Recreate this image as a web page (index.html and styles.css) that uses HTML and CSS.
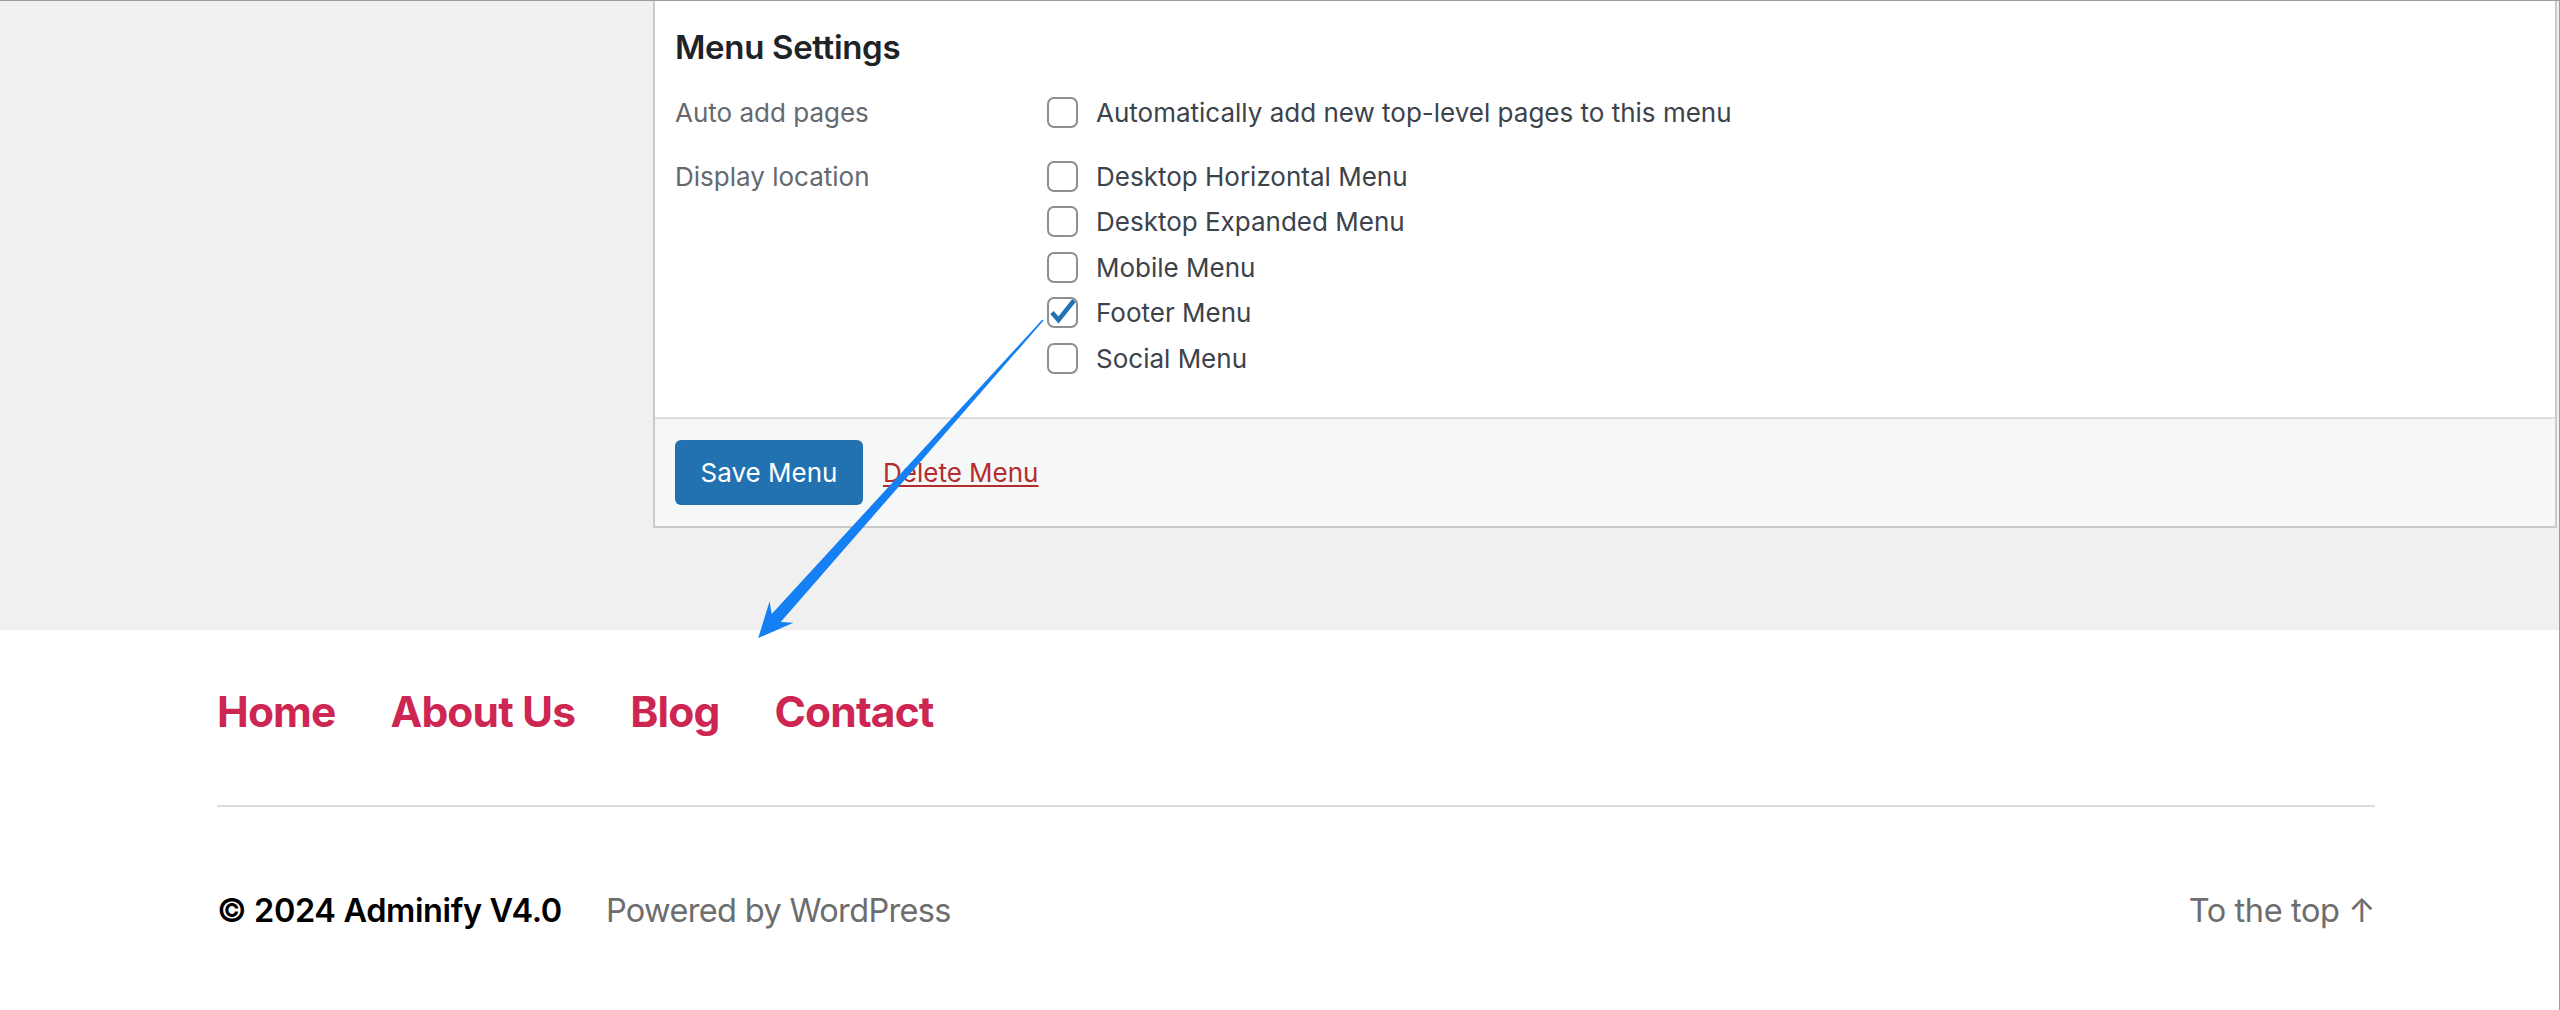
FILE: index.html
```html
<!DOCTYPE html>
<html lang="en">
	<head>
		<title>Menu Settings</title>
		<meta charset="utf-8">
		<link rel="stylesheet" href="styles.css">
	</head>
	<body>
		<div id="screen">
			<div id="admin">
				<div id="menu-settings">
					<div class="settings-body">
						<h3>Menu Settings</h3>
						<div class="setting">
							<div class="setting-label">Auto add pages</div>
							<div class="setting-options">
								<label class="option"><span class="box"></span>Automatically add new top-level pages to this menu</label>
							</div>
						</div>
						<div class="setting">
							<div class="setting-label">Display location</div>
							<div class="setting-options">
								<label class="option"><span class="box"></span>Desktop Horizontal Menu</label>
								<label class="option"><span class="box"></span>Desktop Expanded Menu</label>
								<label class="option"><span class="box"></span>Mobile Menu</label>
								<label class="option"><span class="box checked"><svg viewBox="0 0 31 31"><polyline points="5,15.5 11.5,23 27,3.5" /></svg></span>Footer Menu</label>
								<label class="option"><span class="box"></span>Social Menu</label>
							</div>
						</div>
					</div>
					<div class="settings-footer">
						<button class="save">Save Menu</button>
						<a class="delete" href="#">Delete Menu</a>
					</div>
				</div>
			</div>
			<footer id="site-footer">
				<nav class="footer-menu">
					<a href="#">Home</a>
					<a href="#">About Us</a>
					<a href="#">Blog</a>
					<a href="#">Contact</a>
				</nav>
				<hr>
				<div class="credits">
					<p class="copyright">&copy; 2024 Adminify V4.0</p>
					<p class="powered">Powered by WordPress</p>
					<a class="to-top" href="#">To the top &uarr;</a>
				</div>
			</footer>
			<svg id="arrow" viewBox="0 0 2560 1010">
				<polygon points="1043.6,320.5 780.7,622 793.4,622.7 758.2,638.1 769.6,601.3 771.7,614 1042.4,319.5" />
			</svg>
		</div>
	</body>
</html>
```

FILE: styles.css
```css
html, body {
	margin: 0;
	height: 100%;
}
body {
	background-color: #ffffff;
	font-family: Inter, 'Liberation Sans', sans-serif;
}
#screen {
	position: relative;
	height: 1010px;
	border-top: 1px solid #9c9c9c;
	border-right: 1px solid #9c9c9c;
	box-sizing: border-box;
	overflow: hidden;
}

/* admin panel */
#admin {
	background-color: #f0f0f1;
	padding: 0 2px 102px 653px;
}
#menu-settings {
	background-color: #ffffff;
	border: 2px solid #c9cacc;
	border-top: none;
}
.settings-body {
	padding: 26px 20px 36px;
}
.settings-body h3 {
	margin: 0 0 23px;
	font-size: 33px;
	line-height: 40px;
	font-weight: 600;
	color: #1d2327;
	letter-spacing: -0.01em;
}
.setting {
	display: grid;
	grid-template-columns: 372px 1fr;
	margin-bottom: 18px;
}
.setting:last-child {
	margin-bottom: 0;
}
.setting-label {
	font-size: 26px;
	line-height: 45.5px;
	color: #646970;
}
.setting-options {
	display: flex;
	flex-direction: column;
}
.option {
	display: flex;
	align-items: center;
	gap: 18px;
	height: 45.5px;
	font-size: 26px;
	color: #3c434a;
}
.box {
	flex: 0 0 auto;
	width: 31px;
	height: 31px;
	box-sizing: border-box;
	border: 2px solid #8c8f94;
	border-radius: 7px;
	background-color: #ffffff;
	position: relative;
}
.box svg {
	position: absolute;
	left: -2px;
	top: -2px;
	width: 31px;
	height: 31px;
}
.box polyline {
	fill: none;
	stroke: #2271b1;
	stroke-width: 4.5;
	stroke-linejoin: miter;
}
.settings-footer {
	display: flex;
	align-items: center;
	gap: 20px;
	padding: 21px 20px 21px;
	background-color: #f6f7f7;
	border-top: 2px solid #dcdcde;
}
.save {
	appearance: none;
	width: 188px;
	height: 65px;
	border: none;
	border-radius: 6px;
	background-color: #2271b1;
	color: #ffffff;
	font-family: inherit;
	font-size: 26px;
}
.delete {
	font-size: 26px;
	color: #b32d2e;
	text-decoration: underline;
	text-underline-offset: 3px;
}

/* site footer */
#site-footer {
	padding: 57px 184px 0 217px;
}
.footer-menu {
	display: flex;
	gap: 55px;
}
.footer-menu a {
	font-size: 42.5px;
	line-height: 50px;
	font-weight: 700;
	letter-spacing: -0.02em;
	color: #cd2653;
	text-decoration: none;
}
#site-footer hr {
	margin: 68px 0 0;
	border: none;
	border-top: 2px solid #dcdcdc;
}
.credits {
	display: flex;
	align-items: center;
	margin-top: 85px;
	font-size: 32.5px;
	line-height: 38px;
	letter-spacing: -0.012em;
}
.credits p {
	margin: 0;
}
.copyright {
	font-weight: 600;
	color: #000000;
}
.powered {
	margin-left: 44px !important;
	letter-spacing: -0.02em;
	color: #6d6d6d;
}
.to-top {
	margin-left: auto;
	color: #6d6d6d;
	text-decoration: none;
}

/* annotation */
#arrow {
	position: absolute;
	left: 0;
	top: -1px;
	width: 2560px;
	height: 1010px;
	pointer-events: none;
}
#arrow polygon {
	fill: #1580f3;
}
```
